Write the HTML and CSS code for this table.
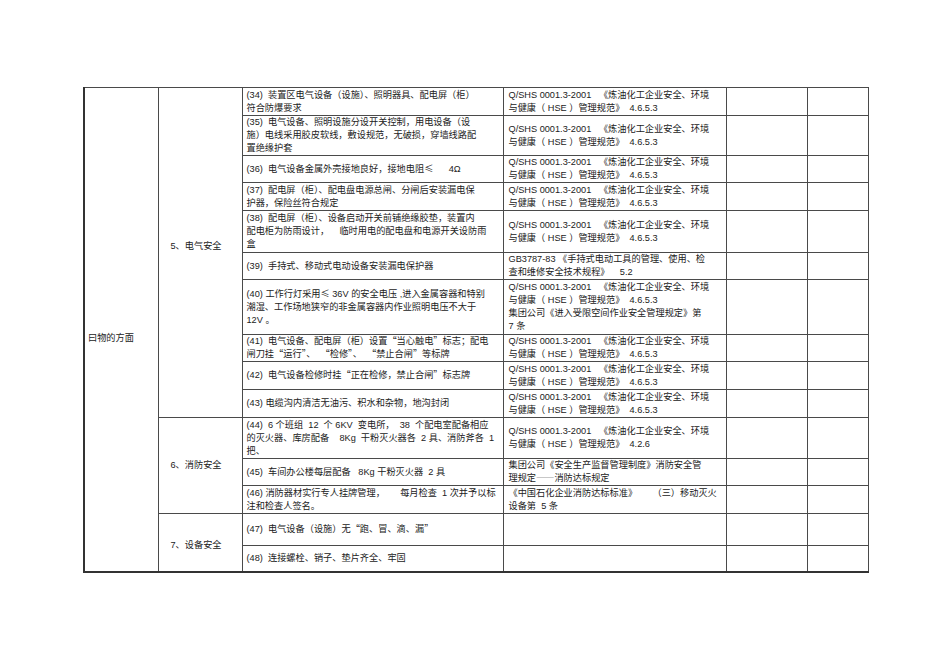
FILE: index.html
```html
<!DOCTYPE html>
<html lang="zh-CN">
<head>
<meta charset="utf-8">
<title>检查表</title>
<link rel="stylesheet" href="styles.css">
</head>
<body>
<div class="page">
<table class="sheet">
<colgroup>
<col class="c1"><col class="c2"><col class="c3"><col class="c4"><col class="c5"><col class="c6">
</colgroup>
<tbody>
<tr class="h28">
<td class="cat" rowspan="15"><span>曰物的方面</span></td>
<td class="sub sub5" rowspan="10">5、电气安全</td>
<td class="item">(34)  装置区电气设备（设施）、照明器具、配电屏（柜）<br>符合防爆要求</td>
<td class="ref">Q/SHS 0001.3-2001   《炼油化工企业安全、环境<br>与健康（ HSE ）管理规范》  4.6.5.3</td>
<td></td><td></td>
</tr>
<tr class="h40">
<td class="item">(35)  电气设备、照明设施分设开关控制，用电设备（设<br>施）电线采用胶皮软线，敷设规范，无破损，穿墙线路配<br>置绝缘护套</td>
<td class="ref">Q/SHS 0001.3-2001   《炼油化工企业安全、环境<br>与健康（ HSE ）管理规范》  4.6.5.3</td>
<td></td><td></td>
</tr>
<tr class="h27">
<td class="item">(36)  电气设备金属外壳接地良好，接地电阻<span class="cj">≤</span>      4Ω</td>
<td class="ref">Q/SHS 0001.3-2001   《炼油化工企业安全、环境<br>与健康（ HSE ）管理规范》  4.6.5.3</td>
<td></td><td></td>
</tr>
<tr class="h28">
<td class="item">(37)  配电屏（柜）、配电盘电源总闸、分闸后安装漏电保<br>护器，保险丝符合规定</td>
<td class="ref">Q/SHS 0001.3-2001   《炼油化工企业安全、环境<br>与健康（ HSE ）管理规范》  4.6.5.3</td>
<td></td><td></td>
</tr>
<tr class="h42">
<td class="item">(38)  配电屏（柜）、设备启动开关前铺绝缘胶垫，装置内<br>配电柜为防雨设计，    临时用电的配电盘和电源开关设防雨<br>盒</td>
<td class="ref">Q/SHS 0001.3-2001   《炼油化工企业安全、环境<br>与健康（ HSE ）管理规范》  4.6.5.3</td>
<td></td><td></td>
</tr>
<tr class="h27">
<td class="item">(39)  手持式、移动式电动设备安装漏电保护器</td>
<td class="ref">GB3787-83 《手持式电动工具的管理、使用、检<br>查和维修安全技术规程》    5.2</td>
<td></td><td></td>
</tr>
<tr class="h55">
<td class="item">(40) 工作行灯采用<span class="cj">≤</span> 36V 的安全电压 ,进入金属容器和特别<br>潮湿、工作场地狭窄的非金属容器内作业照明电压不大于<br>12V 。</td>
<td class="ref">Q/SHS 0001.3-2001   《炼油化工企业安全、环境<br>与健康（ HSE ）管理规范》  4.6.5.3<br>集团公司《进入受限空间作业安全管理规定》第<br>7 条</td>
<td></td><td></td>
</tr>
<tr class="h27">
<td class="item">(41)  电气设备、配电屏（柜）设置<span class="cj">“</span>当心触电<span class="cj">”</span>标志；配电<br>闸刀挂<span class="cj">“</span>运行<span class="cj">”</span>、  <span class="cj">“</span>检修<span class="cj">”</span>、  <span class="cj">“</span>禁止合闸<span class="cj">”</span>等标牌</td>
<td class="ref">Q/SHS 0001.3-2001   《炼油化工企业安全、环境<br>与健康（ HSE ）管理规范》  4.6.5.3</td>
<td></td><td></td>
</tr>
<tr class="h28">
<td class="item">(42)  电气设备检修时挂<span class="cj">“</span>正在检修，禁止合闸<span class="cj">”</span>标志牌</td>
<td class="ref">Q/SHS 0001.3-2001   《炼油化工企业安全、环境<br>与健康（ HSE ）管理规范》  4.6.5.3</td>
<td></td><td></td>
</tr>
<tr class="h28">
<td class="item">(43) 电缆沟内清洁无油污、积水和杂物，地沟封闭</td>
<td class="ref">Q/SHS 0001.3-2001   《炼油化工企业安全、环境<br>与健康（ HSE ）管理规范》  4.6.5.3</td>
<td></td><td></td>
</tr>
<tr class="h41">
<td class="sub" rowspan="3">6、消防安全</td>
<td class="item">(44)  6 个班组  12  个 6KV  变电所，  38  个配电室配备相应<br>的灭火器、库房配备    8Kg  干粉灭火器各  2 具、消防斧各  1<br>把、</td>
<td class="ref">Q/SHS 0001.3-2001   《炼油化工企业安全、环境<br>与健康（ HSE ）管理规范》  4.2.6</td>
<td></td><td></td>
</tr>
<tr class="h27">
<td class="item">(45)  车间办公楼每层配备   8Kg 干粉灭火器  2 具</td>
<td class="ref">集团公司《安全生产监督管理制度》消防安全管<br>理规定<span class="cj">——</span>消防达标规定</td>
<td></td><td></td>
</tr>
<tr class="h28">
<td class="item">(46) 消防器材实行专人挂牌管理，      每月检查  1 次并予以标<br>注和检查人签名。</td>
<td class="ref">《中国石化企业消防达标标准》      （三）移动灭火<br>设备第  5 条</td>
<td></td><td></td>
</tr>
<tr class="h32">
<td class="sub sub7" rowspan="2">7、设备安全</td>
<td class="item">(47)  电气设备（设施）无<span class="cj">“</span>跑、冒、滴、漏<span class="cj">”</span></td>
<td class="ref"></td>
<td></td><td></td>
</tr>
<tr class="h26">
<td class="item">(48)  连接螺栓、销子、垫片齐全、牢固</td>
<td class="ref"></td>
<td></td><td></td>
</tr>
</tbody>
</table>
</div>
</body>
</html>
```
FILE: styles.css
```css
html, body {
  margin: 0;
  padding: 0;
  background: #ffffff;
}

.page {
  padding: 87px 0 0 83px;
}

.sheet {
  border-collapse: collapse;
  table-layout: fixed;
  width: 784px;
  font-family: "Liberation Sans", "Noto Sans CJK SC", sans-serif;
  font-size: 9.2px;
  line-height: 13px;
  color: #222222;
  border-top: 1px solid #444444;
  border-right: 1px solid #444444;
  border-left: 2px solid #333333;
  border-bottom: 2px solid #333333;
}

.c1 { width: 74px; }
.c2 { width: 84px; }
.c3 { width: 261px; }
.c4 { width: 223px; }
.c5 { width: 81px; }
.c6 { width: 61px; }

.sheet td {
  border: 1px solid #4a4a4a;
  padding: 0;
  vertical-align: middle;
  white-space: pre;
  overflow: hidden;
}

.cj {
  font-family: "Noto Sans CJK SC", sans-serif;
  line-height: 0;
}

.sheet td.cat {
  padding: 18px 0 0 3px;
}

.sheet td.sub {
  padding-left: 12px;
}

.sheet td.sub5 {
  padding-bottom: 12px;
}

.sheet td.sub7 {
  padding-top: 6px;
}

.sheet td.item {
  padding-left: 4px;
}

.sheet td.ref {
  padding-left: 5px;
}

.h26 { height: 26px; }
.h27 { height: 27px; }
.h28 { height: 28px; }
.h32 { height: 32px; }
.h40 { height: 40px; }
.h41 { height: 41px; }
.h42 { height: 42px; }
.h55 { height: 55px; }
```
